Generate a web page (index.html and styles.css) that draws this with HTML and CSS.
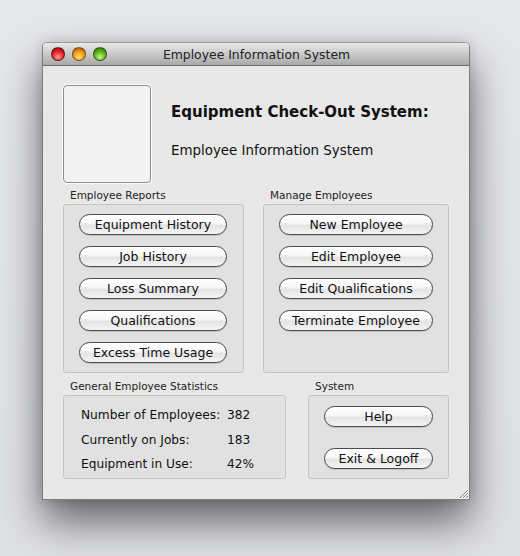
FILE: index.html
```html
<!DOCTYPE html>
<html lang="en">

<head>
  <meta charset="UTF-8">
  <title>Employee Information System</title>
  <link rel="stylesheet" href="styles.css">
</head>

<body>
  <div class="window">
    <div class="titlebar">
      <div class="lights">
        <span class="light red"></span>
        <span class="light orange"></span>
        <span class="light green"></span>
      </div>
      <div class="title">Employee Information System</div>
    </div>

    <div class="content">
      <div class="head">
        <div class="photo"></div>
        <div class="headings">
          <h1>Equipment Check-Out System:</h1>
          <p>Employee Information System</p>
        </div>
      </div>

      <div class="row">
        <div class="group reports">
          <div class="label">Employee Reports</div>
          <div class="box">
            <button>Equipment History</button>
            <button>Job History</button>
            <button>Loss Summary</button>
            <button>Qualifications</button>
            <button>Excess Time Usage</button>
          </div>
        </div>
        <div class="group manage">
          <div class="label">Manage Employees</div>
          <div class="box">
            <button>New Employee</button>
            <button>Edit Employee</button>
            <button>Edit Qualifications</button>
            <button>Terminate Employee</button>
          </div>
        </div>
      </div>

      <div class="row">
        <div class="group stats">
          <div class="label">General Employee Statistics</div>
          <div class="box">
            <div class="stat"><span>Number of Employees:</span><span>382</span></div>
            <div class="stat"><span>Currently on Jobs:</span><span>183</span></div>
            <div class="stat"><span>Equipment in Use:</span><span>42%</span></div>
          </div>
        </div>
        <div class="group system">
          <div class="label">System</div>
          <div class="box">
            <button>Help</button>
            <button>Exit &amp; Logoff</button>
          </div>
        </div>
      </div>
    </div>
    <svg class="grip" width="11" height="11" viewBox="0 0 11 11">
      <path d="M10 2 L2 10 M10 5 L5 10 M10 8 L8 10" stroke="#777" stroke-width="1" />
      <path d="M11 2 L2 11 M11 5 L5 11 M11 8 L8 11" stroke="#fff" stroke-width="1" />
    </svg>
  </div>
</body>

</html>
```

FILE: styles.css
```css
html,
body {
  margin: 0;
  padding: 0;
  height: 100%;
}

body {
  background: linear-gradient(#e6e7eb, #dfe0e4);
  font-family: "DejaVu Sans", "Liberation Sans", sans-serif;
  color: #111;
  padding: 42px 0 0 42px;
  box-sizing: border-box;
}

.window {
  width: 428px;
  height: 458px;
  box-sizing: border-box;
  background: #e8e8e8;
  border: 1px solid #7d7d7d;
  border-top-color: #9a9a9a;
  border-radius: 5px 5px 0 0;
  box-shadow: 0 22px 40px rgba(0, 0, 0, 0.55), 0 0 12px rgba(0, 0, 0, 0.15);
  position: relative;
}

.titlebar {
  height: 22px;
  background: linear-gradient(#e9e9e9, #c9c9c9 50%, #a9a9a9);
  border-bottom: 1px solid #6e6e6e;
  border-radius: 4px 4px 0 0;
  display: flex;
  align-items: center;
  position: relative;
}

.lights {
  display: flex;
  gap: 7px;
  padding-left: 8px;
}

.light {
  width: 14px;
  height: 14px;
  border-radius: 50%;
  border: 1px solid rgba(0, 0, 0, 0.45);
  box-sizing: border-box;
}

.red {
  background: radial-gradient(circle at 50% 75%, #ff9a9a, #e2262a 50%, #8e0508);
}

.orange {
  background: radial-gradient(circle at 50% 75%, #ffe27a, #f09a13 50%, #9a5104);
}

.green {
  background: radial-gradient(circle at 50% 75%, #c8f78a, #5bb41d 50%, #2b6c07);
}

.title {
  position: absolute;
  left: 0;
  right: 0;
  text-align: center;
  font-size: 12.4px;
  color: #222;
  padding-left: 1px;
}

.content {
  padding: 19px 20px 0 20px;
}

.head {
  display: flex;
  gap: 20px;
  margin-bottom: 5px;
}

.photo {
  width: 88px;
  height: 98px;
  box-sizing: border-box;
  background: #f2f2f2;
  border: 1px solid #8e8e8e;
  border-radius: 4px;
  box-shadow: 0 0 0 1px #fbfbfb;
}

.headings h1 {
  margin: 17px 0 0 0;
  font-size: 15px;
  font-weight: bold;
  line-height: 20px;
}

.headings p {
  margin: 19px 0 0 0;
  font-size: 13.4px;
  line-height: 20px;
}

.row {
  display: flex;
  justify-content: space-between;
  margin-bottom: 6px;
}

.label {
  font-size: 10.5px;
  line-height: 14px;
  padding-left: 7px;
  margin-bottom: 2px;
  color: #222;
}

.box {
  box-sizing: border-box;
  background: #e1e1e1;
  border: 1px solid #c4c4c4;
  border-radius: 3px;
  display: flex;
  flex-direction: column;
  gap: 11px;
}

.reports .box,
.manage .box {
  height: 169px;
  padding: 9px 0 0 15px;
}

.reports .box {
  width: 181px;
}

.manage .box {
  width: 186px;
}

.stats .box {
  width: 223px;
  height: 84px;
  padding: 9px 0 0 17px;
  gap: 4px;
}

.system .box {
  width: 141px;
  height: 84px;
  padding: 10px 0 0 15px;
  gap: 21px;
}

button {
  height: 21px;
  box-sizing: border-box;
  border: 1px solid #4a4a4a;
  border-radius: 11px;
  background: linear-gradient(#ffffff, #f7f7f7 45%, #e4e4e4 55%, #f4f4f4);
  box-shadow: 0 1px 1px rgba(0, 0, 0, 0.15);
  font-family: inherit;
  font-size: 12.5px;
  color: #111;
  padding: 0;
  line-height: 19px;
}

.reports button {
  width: 148px;
}

.manage button {
  width: 154px;
}

.system button {
  width: 109px;
}

.stat {
  display: flex;
  font-size: 12.2px;
  line-height: 20.5px;
  white-space: nowrap;
}

.stat span:first-child {
  width: 146px;
}

.grip {
  position: absolute;
  right: 0;
  bottom: 0;
}
```
